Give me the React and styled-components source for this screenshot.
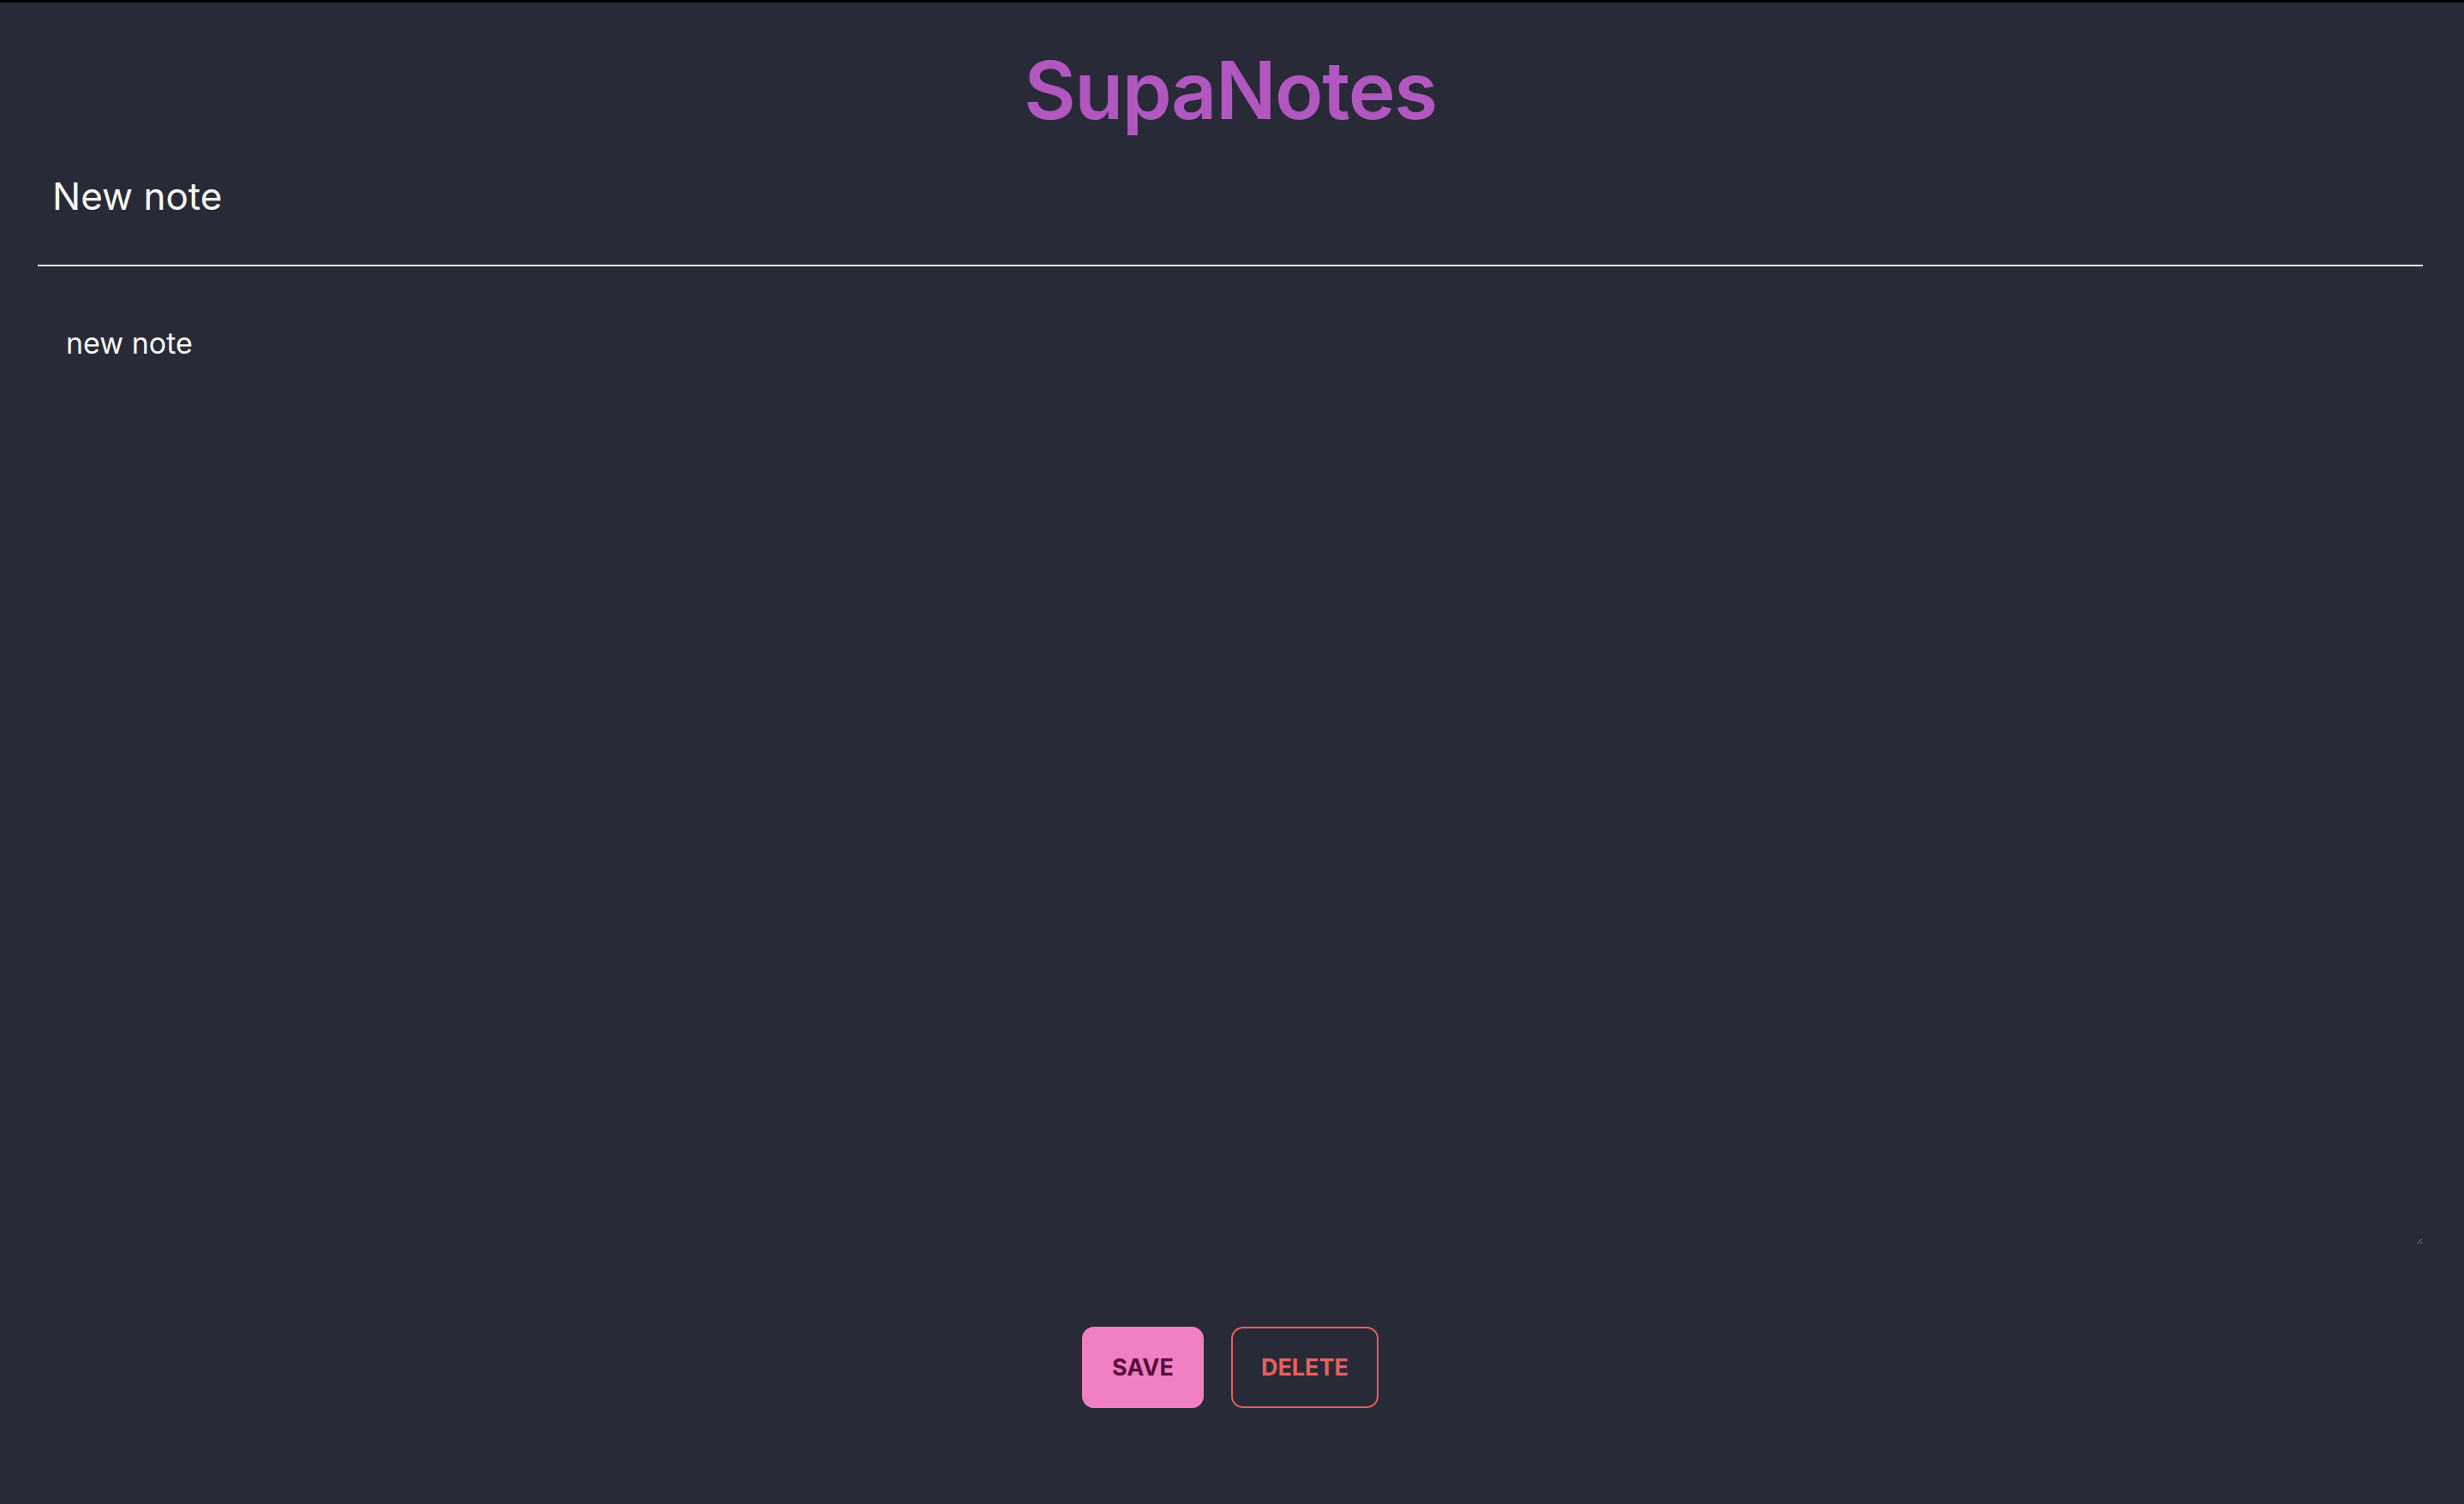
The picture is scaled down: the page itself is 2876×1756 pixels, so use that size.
import React, { useState } from 'react';
import styled, { createGlobalStyle } from 'styled-components';

const GlobalStyle = createGlobalStyle`
  html, body {
    margin: 0;
    padding: 0;
    background-color: #282a37;
  }
  body {
    border-top: 3px solid #000;
    font-family: Inter, "Noto Sans", sans-serif;
    color: #f8f8f2;
    min-height: 1753px;
  }
`;

const Page = styled.main`
  display: flex;
  flex-direction: column;
  padding: 0 48px 0 44px;
`;

const Title = styled.h1`
  margin: 0;
  padding-top: 44px;
  text-align: center;
  font-size: 93px;
  font-weight: 600;
  line-height: 116px;
  letter-spacing: -1.5px;
  color: #b057c0;
`;

const TitleInput = styled.input`
  margin-top: 21px;
  padding: 16px 17px 51px;
  background: transparent;
  border: none;
  border-bottom: 2px solid #ececf0;
  color: #f8f8f2;
  font-family: inherit;
  font-size: 44px;
  line-height: 58px;
  outline: none;
`;

const Body = styled.textarea`
  box-sizing: border-box;
  margin-top: 32px;
  height: 1110px;
  padding: 34px 33px 0;
  background: transparent;
  border: none;
  color: #f8f8f2;
  color-scheme: dark;
  font-family: inherit;
  font-size: 34px;
  line-height: 48px;
  outline: none;
`;

const Actions = styled.div`
  display: flex;
  justify-content: center;
  gap: 32px;
  margin-top: 96px;
`;

const Button = styled.button`
  height: 95px;
  padding: 0 33px;
  border-radius: 14px;
  border: 2px solid ${(p) => (p.$outline ? '#e8605a' : '#f07fc4')};
  background-color: ${(p) => (p.$outline ? 'transparent' : '#f07fc4')};
  color: ${(p) => (p.$outline ? '#e8605a' : '#5a0d38')};
  font-family: inherit;
  font-size: 27px;
  font-weight: 700;
  cursor: pointer;
`;

const App = () => {
  const [title, setTitle] = useState('New note');
  const [content, setContent] = useState('new note');

  return (
    <>
      <GlobalStyle />
      <Page>
        <Title>SupaNotes</Title>
        <TitleInput value={title} onChange={(e) => setTitle(e.target.value)} />
        <Body value={content} onChange={(e) => setContent(e.target.value)} />
        <Actions>
          <Button>SAVE</Button>
          <Button $outline>DELETE</Button>
        </Actions>
      </Page>
    </>
  );
};

export default App;
